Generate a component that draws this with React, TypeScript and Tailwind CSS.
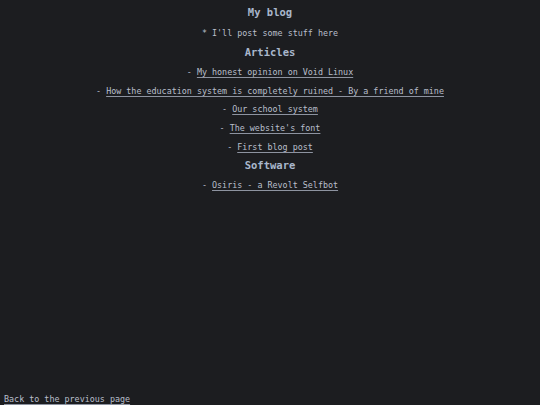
const articles = [
  "My honest opinion on Void Linux",
  "How the education system is completely ruined - By a friend of mine",
  "Our school system",
  "The website's font",
  "First blog post",
];

const software = ["Osiris - a Revolt Selfbot"];

function LinkItem({ title }: { title: string }) {
  return (
    <li className="h-[18.7px] leading-[18.7px]">
      - <a href="#" className="underline underline-offset-2 decoration-[#8d93a0] text-[#b9bfcb]">{title}</a>
    </li>
  );
}

export default function App() {
  return (
    <div
      className="min-h-screen w-full bg-[#1c1d20] text-[#b9bfcb] text-[8.4px] flex flex-col"
      style={{ fontFamily: '"DejaVu Sans Mono", "Liberation Mono", monospace' }}
    >
      <div className="flex flex-col items-center text-center">
        <h1 className="mt-[3px] h-[19px] leading-[19px] text-[10.5px] font-bold text-[#a9b7cc]">My blog</h1>
        <p className="h-[20px] leading-[20px] mt-[1px]">* I'll post some stuff here</p>
        <h2 className="h-[19px] leading-[19px] text-[10.5px] font-bold text-[#a9b7cc]">Articles</h2>
        <ul className="mt-[1px]">
          {articles.map((a) => (
            <LinkItem key={a} title={a} />
          ))}
        </ul>
        <h2 className="h-[19px] leading-[19px] text-[10.5px] font-bold text-[#a9b7cc]">Software</h2>
        <ul className="mt-[1px]">
          {software.map((a) => (
            <LinkItem key={a} title={a} />
          ))}
        </ul>
      </div>
      <div className="mt-auto pl-[4px] h-[12px] leading-[12px]">
        <a href="#" className="underline underline-offset-2 decoration-[#8d93a0]">Back to the previous page</a>
      </div>
    </div>
  );
}
